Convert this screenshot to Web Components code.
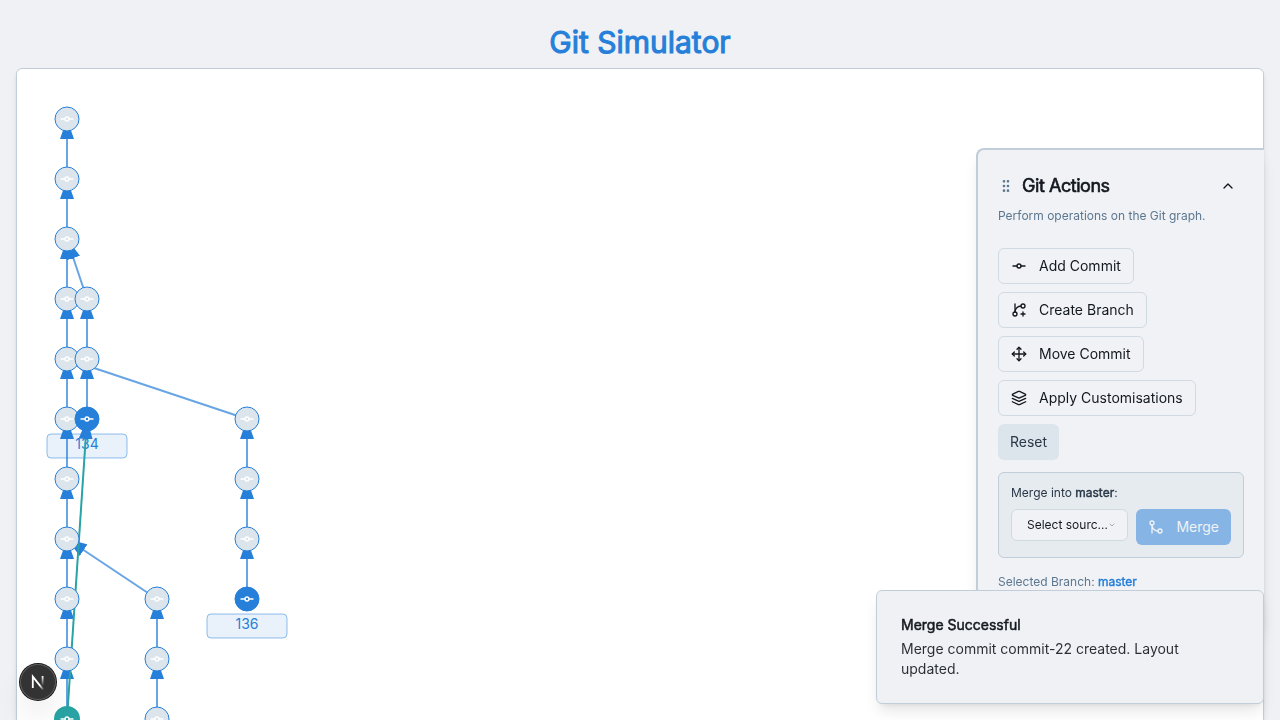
<!DOCTYPE html>
<html lang="en">
<head>
<meta charset="utf-8">
<meta name="viewport" content="width=device-width, initial-scale=1">
<title>Git Simulator</title>
<style>
  :root {
    --bg: #f0f1f5;
    --fg: #14191f;
    --primary: #267fd9;
    --accent: #29a3a3;
    --secondary: #dce5ec;
    --secondary-fg: #293747;
    --muted-fg: #5c778f;
    --border: #c1cdd8;
    --panel: #f0f2f6;
    --strong: .036em;
  }
  html { background: var(--bg); scrollbar-width: none; }
  body {
    margin: 0;
    background: var(--bg);
    color: var(--fg);
    font-family: Inter, "Liberation Sans", sans-serif;
    font-size: 14px;
    line-height: 20px;
  }
  .branch { color: var(--primary); font-weight: 400; -webkit-text-stroke: var(--strong); }
</style>
</head>
<body>
<git-app>
  <git-graph></git-graph>
  <actions-panel slot="overlay" heading="Git Actions" note="Perform operations on the Git graph.">
    <action-button icon="commit">Add Commit</action-button>
    <action-button icon="branch">Create Branch</action-button>
    <action-button icon="move">Move Commit</action-button>
    <action-button icon="layers">Apply Customisations</action-button>
    <action-button variant="secondary">Reset</action-button>
    <merge-form slot="form" branch="master"></merge-form>
    <span slot="status">Selected Branch: <b class="branch">master</b></span>
  </actions-panel>
  <toast-message slot="overlay">
    <span slot="title">Merge Successful</span>
    Merge commit commit-22 created. Layout updated.
  </toast-message>
  <dev-badge slot="overlay"></dev-badge>
</git-app>

<script>
const ICONS = {
  commit: '<circle cx="12" cy="12" r="3"/><line x1="3" x2="9" y1="12" y2="12"/><line x1="15" x2="21" y1="12" y2="12"/>',
  branch: '<path d="M6 3v12"/><path d="M18 9a3 3 0 1 0 0-6 3 3 0 0 0 0 6z"/><path d="M6 21a3 3 0 1 0 0-6 3 3 0 0 0 0 6z"/><path d="M15 6a9 9 0 0 0-9 9"/><path d="M18 15v6"/><path d="M21 18h-6"/>',
  move: '<path d="M12 2v20"/><path d="m15 19-3 3-3-3"/><path d="m19 9 3 3-3 3"/><path d="M2 12h20"/><path d="m5 9-3 3 3 3"/><path d="m9 5 3-3 3 3"/>',
  layers: '<path d="m12.83 2.18a2 2 0 0 0-1.66 0L2.6 6.08a1 1 0 0 0 0 1.83l8.58 3.91a2 2 0 0 0 1.66 0l8.58-3.9a1 1 0 0 0 0-1.83Z"/><path d="m22 12.65-9.17 4.16a2 2 0 0 1-1.66 0L2 12.65"/><path d="m22 17.65-9.17 4.16a2 2 0 0 1-1.66 0L2 17.65"/>',
  merge: '<circle cx="18" cy="18" r="3"/><circle cx="6" cy="6" r="3"/><path d="M6 21V9a9 9 0 0 0 9 9"/>',
  grip: '<circle cx="9" cy="12" r="1"/><circle cx="9" cy="5" r="1"/><circle cx="9" cy="19" r="1"/><circle cx="15" cy="12" r="1"/><circle cx="15" cy="5" r="1"/><circle cx="15" cy="19" r="1"/>',
  up: '<path d="m18 15-6-6-6 6"/>',
  down: '<path d="m6 9 6 6 6-6"/>'
};
const icon = (name, size = 16) =>
  `<svg class="icon" width="${size}" height="${size}" viewBox="0 0 24 24" fill="none" stroke="currentColor" stroke-width="2" stroke-linecap="round" stroke-linejoin="round" aria-hidden="true">${ICONS[name]}</svg>`;

class Base extends HTMLElement {
  connectedCallback() {
    if (!this.shadowRoot) this.attachShadow({ mode: 'open' }).innerHTML =
      `<style>*{box-sizing:border-box}.icon{display:block;flex:none}button,select{font:inherit;color:inherit;margin:0}</style>` + this.render();
  }
}

customElements.define('git-app', class extends Base {
  render() {
    return `<style>
      :host { display: block; padding: 24px 16px 16px; }
      h1 { margin: 0 0 8px; text-align: center; font-size: 30px; line-height: 36px; font-weight: 400;
        -webkit-text-stroke: var(--strong); color: var(--primary); }
      main { background: #fff; border: 1px solid var(--border); border-radius: 6px; overflow: hidden;
        box-shadow: 0 4px 6px -1px #0000001a, 0 2px 4px -2px #0000001a; }
    </style>
    <h1>Git Simulator</h1>
    <main><slot></slot></main>
    <slot name="overlay"></slot>`;
  }
});

customElements.define('git-graph', class extends Base {
  render() {
    const nodes = [], edges = [];
    for (let y = 50; y < 800; y += 60) {
      nodes.push([50, y, y === 650 ? 'merged' : '']);
      if (y > 50) edges.push([50, y, 50, y - 60]);
    }
    nodes.push([70, 230, ''], [70, 290, ''], [70, 350, 'head']);
    edges.push([70, 230, 50, 170], [70, 290, 70, 230], [70, 350, 70, 290]);
    for (let y = 530; y < 800; y += 60) {
      nodes.push([140, y, '']);
      edges.push(y === 530 ? [140, 530, 50, 470] : [140, y, 140, y - 60]);
    }
    for (let y = 350; y <= 530; y += 60) {
      nodes.push([230, y, y === 530 ? 'head' : '']);
      edges.push(y === 350 ? [230, 350, 50, 290] : [230, y, 230, y - 60]);
    }
    const line = ([a, b, c, d], cls = '') => `<line class="edge ${cls}" x1="${a}" y1="${b}" x2="${c}" y2="${d}" marker-end="url(#arrow)"/>`;
    const label = (x, y, t) => `<rect class="tag" x="${x - 40}" y="${y + 15}" width="80" height="24" rx="4"/><text x="${x}" y="${y + 30}">${t}</text>`;
    return `<style>
      :host { display: block; }
      svg { display: block; width: 100%; height: 840px; }
      .edge { stroke: var(--primary); stroke-width: 2; stroke-opacity: .7; }
      .edge.merge { stroke: var(--accent); stroke-opacity: 1; }
      marker { fill: var(--primary); }
      .node circle.disc { fill: var(--secondary); stroke: var(--primary); }
      .node.head circle.disc { fill: var(--primary); }
      .node.merged circle.disc { fill: var(--accent); stroke: var(--accent); stroke-width: 2; }
      .glyph { fill: none; stroke: #fff; stroke-width: 2; stroke-linecap: round; }
      .tag { fill: var(--primary); fill-opacity: .1; stroke: var(--primary); stroke-opacity: .5; }
      text { fill: var(--primary); font-size: 14px; text-anchor: middle; }
    </style>
    <svg role="img" aria-label="Commit graph">
      <defs>
        <marker id="arrow" markerWidth="10" markerHeight="7" refX="10" refY="3.5" orient="auto"><polygon points="0 0, 10 3.5, 0 7"/></marker>
        <g id="glyph" class="glyph" transform="scale(.6667) translate(-12 -12)">${ICONS.commit}</g>
      </defs>
      ${label(70, 350, '134')}${label(230, 530, '136')}
      ${edges.map(e => line(e)).join('')}
      ${line([50, 650, 70, 350], 'merge')}
      ${nodes.map(([x, y, c]) => `<g class="node ${c}" transform="translate(${x} ${y})"><circle class="disc" r="12"/><use href="#glyph"/></g>`).join('')}
    </svg>`;
  }
});

customElements.define('actions-panel', class extends Base {
  render() {
    return `<style>
      :host { display: block; position: fixed; top: 148px; right: 16px; width: 288px; padding: 20px; min-height: 480px;
        box-sizing: border-box; background: var(--panel); border: 2px solid var(--border); border-right: 0;
        border-radius: 8px 0 0 8px; box-shadow: 0 10px 15px -3px #0000001a, 0 4px 6px -4px #0000001a; }
      header { display: flex; align-items: center; gap: 8px; height: 32px; }
      header > .icon { color: var(--muted-fg); }
      h2 { flex: 1; margin: 0; font-size: 18px; line-height: 28px; font-weight: 400; -webkit-text-stroke: var(--strong); letter-spacing: -0.025em; }
      header button { display: grid; place-items: center; width: 32px; height: 32px; padding: 0; border: 0; background: none; }
      p { margin: 6px 0 24px; font-size: 12px; line-height: 16px; color: var(--muted-fg); }
      .actions { display: flex; flex-direction: column; align-items: flex-start; gap: 8px; margin-bottom: 12px; }
      .status { margin-top: 16px; font-size: 12px; line-height: 16px; color: var(--muted-fg); }
    </style>
    <header>${icon('grip')}<h2>${this.getAttribute('heading')}</h2><button type="button" aria-label="Collapse">${icon('up')}</button></header>
    <p>${this.getAttribute('note')}</p>
    <div class="actions"><slot></slot></div>
    <slot name="form"></slot>
    <div class="status"><slot name="status"></slot></div>`;
  }
});

customElements.define('action-button', class extends Base {
  render() {
    const name = this.getAttribute('icon');
    return `<style>
      :host { display: block; }
      button { display: flex; align-items: center; gap: 12px; height: 36px; padding: 0 12px; border-radius: 6px;
        border: 1px solid #d0dae1; background: var(--panel); font-size: 14px; line-height: 20px; white-space: nowrap; }
      :host([variant=secondary]) button { border: 0; background: var(--secondary); color: var(--secondary-fg); }
      :host([variant=primary]) button { border: 0; background: var(--primary); color: #f7fafc; opacity: .5; }
    </style>
    <button type="button">${name ? icon(name) : ''}<slot></slot></button>`;
  }
});

customElements.define('merge-form', class extends Base {
  render() {
    return `<style>
      :host { display: block; padding: 12px; border: 1px solid var(--border); border-radius: 6px; background: #e6ebef; }
      label { display: block; margin-bottom: 8px; font-size: 12px; line-height: 16px; color: var(--secondary-fg); }
      b { font-weight: 400; -webkit-text-stroke: var(--strong); }
      .row { display: flex; align-items: flex-start; gap: 8px; }
      .select { flex: 1; min-width: 0; display: grid; align-items: center; }
      .select > * { grid-area: 1 / 1; }
      select { appearance: none; width: 100%; height: 32px; padding: 0 18px 0 15px; border: 1px solid #d0dae1; border-radius: 6px;
        background: var(--panel); font-size: 12px; text-overflow: ellipsis; overflow: hidden; white-space: nowrap; }
      .icon { justify-self: end; margin-right: 12px; opacity: .5; pointer-events: none; }
    </style>
    <label for="source">Merge into <b>${this.getAttribute('branch')}</b>:</label>
    <div class="row">
      <div class="select"><select id="source"><option>Select source branch</option></select>${icon('down', 8)}</div>
      <action-button variant="primary" icon="merge">Merge</action-button>
    </div>`;
  }
});

customElements.define('toast-message', class extends Base {
  render() {
    return `<style>
      :host { display: flex; flex-direction: column; gap: 4px; position: fixed; right: 16px; bottom: 16px; width: 388px;
        box-sizing: border-box; padding: 24px 32px 24px 24px; background: var(--bg); border: 1px solid var(--border);
        border-radius: 6px; box-shadow: 0 10px 15px -3px #0000001a, 0 4px 6px -4px #0000001a; }
      .title { -webkit-text-stroke: var(--strong); }
      .body { opacity: .9; }
    </style>
    <div class="title"><slot name="title"></slot></div>
    <div class="body"><slot></slot></div>`;
  }
});

customElements.define('dev-badge', class extends Base {
  render() {
    return `<style>
      :host { display: block; position: fixed; left: 20px; bottom: 20px; }
      button { display: grid; place-items: center; width: 36px; height: 36px; padding: 0; border: 0; border-radius: 50%;
        background: #333; box-shadow: 0 0 0 1px #171717, inset 0 0 0 1px #5c5c5c, 0 16px 32px -8px #0000003d; }
    </style>
    <button type="button" aria-label="Open dev tools">
      <svg width="36" height="36" viewBox="2 2 36 36" fill="none">
        <defs>
          <linearGradient id="a" x1="22" y1="23" x2="26" y2="28" gradientUnits="userSpaceOnUse"><stop stop-color="#fff"/><stop offset="1" stop-color="#fff" stop-opacity="0"/></linearGradient>
          <linearGradient id="b" x1="25" y1="14" x2="25" y2="24" gradientUnits="userSpaceOnUse"><stop stop-color="#fff"/><stop offset="1" stop-color="#fff" stop-opacity="0"/></linearGradient>
        </defs>
        <path d="M14.8 26V14.6L25.2 27.6" stroke="url(#a)" stroke-width="1.8"/>
        <path d="M24.6 14v9.5" stroke="url(#b)" stroke-width="1.8"/>
      </svg>
    </button>`;
  }
});
</script>
</body>
</html>
